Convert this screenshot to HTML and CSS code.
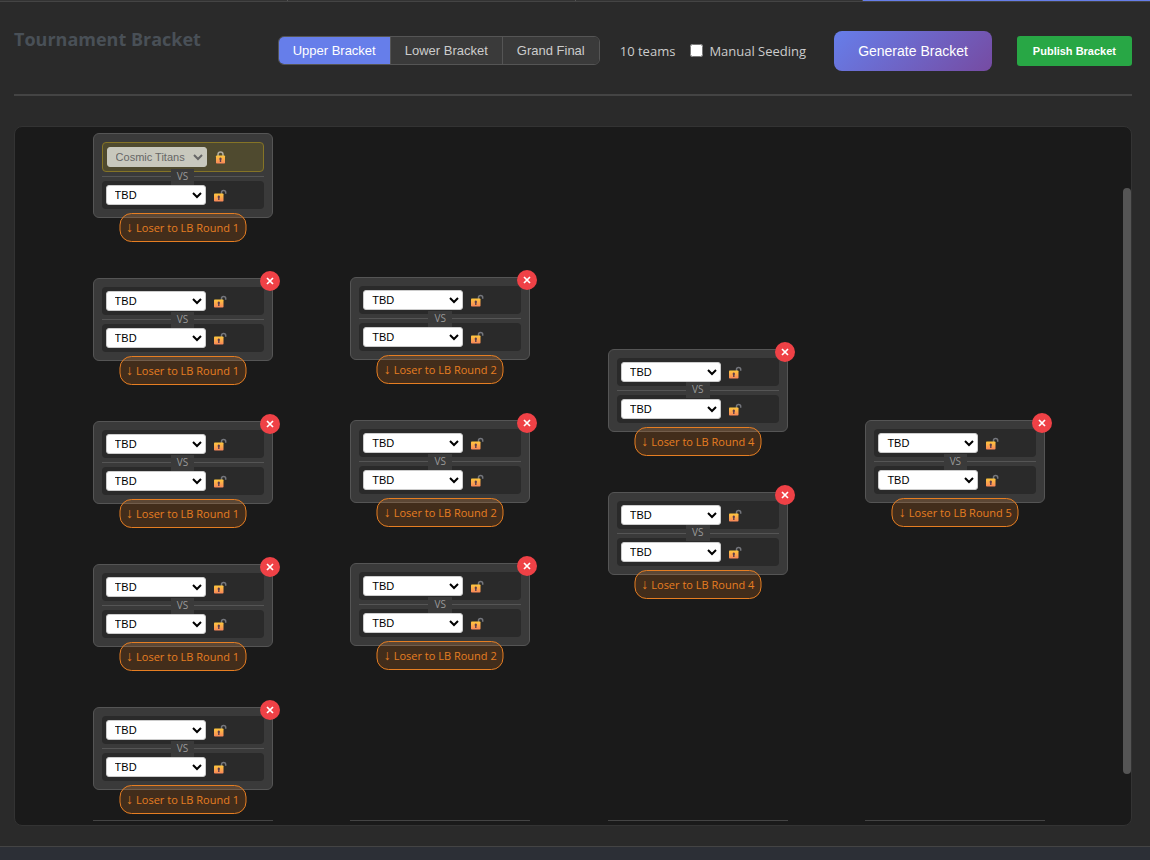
FILE: index.html
```html
<!DOCTYPE html>
<html lang="en">
<head>
<meta charset="utf-8">
<title>Tournament Bracket</title>
<link rel="stylesheet" href="styles.css">
</head>
<body>
<svg width="0" height="0" class="defs" aria-hidden="true">
  <defs>
    <linearGradient id="gold" x1="0" y1="0" x2="0" y2="1"><stop offset="0" stop-color="#ffc83d"/><stop offset="1" stop-color="#f8865a"/></linearGradient>
    <symbol id="lock-open" viewBox="0 0 13 13">
      <path d="M7.500 5.200V3.600a2.100 2.100 0 0 1 4.200 0V4.800" fill="none" stroke="#74767c" stroke-width="1.500"/>
      <rect x="0" y="4.500" width="9.500" height="8" rx="0.800" fill="url(#gold)"/>
      <path d="M4.800 6.600a1.300 1.300 0 0 1 .7 2.300V11H4.100V8.900A1.300 1.300 0 0 1 4.800 6.600z" fill="#5c3b4c"/>
    </symbol>
    <symbol id="lock-closed" viewBox="0 0 13 13">
      <path d="M4 5.500V3.500a2.500 2.500 0 0 1 5 0V5.500" fill="none" stroke="#b0aca0" stroke-width="1.500"/>
      <rect x="2" y="4.500" width="9" height="8" rx="0.800" fill="url(#gold)"/>
      <path d="M6.500 6.600a1.300 1.300 0 0 1 .7 2.300V11H5.800V8.900A1.300 1.300 0 0 1 6.500 6.600z" fill="#5c3b4c"/>
    </symbol>
  </defs>
</svg>
<div class="tabs"><span class="tab"></span><span class="tab"></span><span class="tab"></span><span class="tab tab-active"></span></div>
<main class="page">
  <header class="header">
    <h1 class="title">Tournament Bracket</h1>
    <div class="controls">
      <div class="toggle">
        <button class="toggle-btn is-active" type="button">Upper Bracket</button>
        <button class="toggle-btn" type="button">Lower Bracket</button>
        <button class="toggle-btn" type="button">Grand Final</button>
      </div>
      <span class="count">10 teams</span>
      <label class="seeding"><input type="checkbox" class="check">Manual Seeding</label>
      <button class="generate" type="button">Generate Bracket</button>
      <button class="publish" type="button">Publish Bracket</button>
    </div>
  </header>
  <section class="bracket">
    <div class="rounds" id="rounds"></div>
    <div class="track"><div class="thumb"></div></div>
  </section>
</main>
<footer class="footer"></footer>
<script src="app.js"></script>
</body>
</html>
```
FILE: styles.css
```css
* { box-sizing: border-box; }
body {
  margin: 0;
  min-height: 100vh;
  display: flex;
  flex-direction: column;
  background: #2a2a2a;
  color: #ccc;
  font-family: "Open Sans", "Noto Sans", sans-serif;
}
button, select { font-family: "Liberation Sans", Arial, sans-serif; }
.defs { position: absolute; }

.tabs { display: flex; height: 2px; background: #333; border-bottom: 1px solid #444; }
.tab { flex: 1; border-right: 1px solid #555; }
.tab-active { background: #667eea; border-right: 0; }

.page { padding: 29px 18px 20px 14px; }
.header {
  display: flex;
  justify-content: space-between;
  align-items: flex-start;
  padding-bottom: 23px;
  border-bottom: 2px solid #444;
  margin-bottom: 30px;
}
.title { margin: 0; font-size: 18px; line-height: 16px; font-weight: 700; color: #495057; }
.controls { display: flex; align-items: center; }
.toggle { display: flex; border: 1px solid #555; border-radius: 6px; overflow: hidden; margin: 0 20px 1px 0; }
.toggle-btn {
  height: 27px;
  padding: 0 14px;
  border: 0;
  border-right: 1px solid #555;
  background: #3a3a3a;
  color: #ccc;
  font-size: 13px;
}
.toggle-btn:last-child { border-right: 0; }
.toggle-btn.is-active { background: #667eea; color: #fff; }
.count { font-size: 13px; margin-right: 15px; }
.seeding { display: flex; align-items: center; gap: 6px; font-size: 13px; margin: 0 28px 1px 0; }
.check { width: 13px; height: 13px; margin: 0; }
.generate {
  height: 40px;
  padding: 0 24px;
  border: 0;
  border-radius: 8px;
  background: linear-gradient(135deg, #667eea, #764ba2);
  color: #fff;
  font-size: 14px;
  margin-right: 25px;
}
.publish {
  height: 30px;
  padding: 0 16px;
  border: 0;
  border-radius: 3px;
  background: #28a745;
  color: #fff;
  font-size: 11px;
  font-weight: 700;
}

.bracket {
  display: flex;
  background: #1a1a1a;
  border: 1px solid #333;
  border-radius: 8px;
  overflow: hidden;
}
.rounds { flex: 1; display: flex; justify-content: space-evenly; padding: 6px 0 4px; }
.round {
  width: 180px;
  display: flex;
  flex-direction: column;
  justify-content: center;
  gap: 60px;
  padding-bottom: 30px;
  border-bottom: 1px solid #444;
}
.match {
  position: relative;
  padding: 8px;
  background: #3a3a3a;
  border: 1px solid #555;
  border-radius: 6px;
}
.slot {
  display: flex;
  align-items: center;
  gap: 6px;
  padding: 4px;
  background: #2a2a2a;
  border-radius: 4px;
}
.slot-locked { background: #4f4a2f; border: 1px solid #857426; }
.team {
  width: 100px;
  height: 20px;
  padding: 0 4px;
  border: 1px solid #ccc;
  border-radius: 3px;
  background: #fff;
  color: #000;
  font-size: 11px;
}
.team:disabled { background: #c8c8bd; border-color: #c8c8bd; color: #666; opacity: 1; }
.lock { display: flex; border: 0; padding: 1px 2px 0; background: none; }
.slot-locked .lock { padding: 1px 1px 0; }
.lock-icon { width: 13px; height: 13px; }
.versus {
  position: relative;
  z-index: 1;
  height: 9px;
  display: flex;
  align-items: center;
  justify-content: center;
  background: linear-gradient(#555, #555) center / 100% 1px no-repeat;
}
.versus-text {
  padding: 0 6px 1px;
  background: #3a3a3a;
  color: #999;
  font-size: 10px;
  line-height: 15px;
}
.remove {
  position: absolute;
  top: -8px;
  right: -8px;
  width: 20px;
  height: 20px;
  display: flex;
  align-items: center;
  justify-content: center;
  padding: 0;
  border: 0;
  border-radius: 50%;
  background: #ef4146;
}
.remove-icon { width: 8px; height: 8px; }
.loser {
  position: absolute;
  z-index: 2;
  top: calc(100% - 4px);
  left: 50%;
  transform: translateX(-50%);
  display: flex;
  gap: 3px;
  padding: 0 6px;
  border: 1px solid #e67e22;
  border-radius: 12px;
  background: rgba(230, 126, 34, 0.2);
  color: #e67e22;
  font-size: 11px;
  font-weight: 500;
  line-height: 27px;
  white-space: nowrap;
}
.arrow { font-size: 14px; line-height: 26px; }
.track { width: 8px; padding: 61px 0 51px; display: flex; }
.thumb { flex: 1; border-radius: 4px; background: #555; }
.footer { flex: 1; background: #2c2f36; border-top: 1px solid #444; }
```
FILE: app.js
```js
const rounds = [
  { matches: 5, loser: 1 },
  { matches: 3, loser: 2 },
  { matches: 2, loser: 4 },
  { matches: 1, loser: 5 }
];

function slot(team, locked, label) {
  return `<div class="slot${locked ? " slot-locked" : ""}">
    <select class="team" aria-label="${label}"${locked ? " disabled" : ""}><option>${team}</option></select>
    <button class="lock" type="button" aria-label="Toggle lock"><svg class="lock-icon"><use href="#lock-${locked ? "closed" : "open"}"/></svg></button>
  </div>`;
}

function match(round, r, m) {
  const first = r === 0 && m === 0;
  const name = `Round ${r + 1} match ${m + 1}`;
  const remove = first ? "" : `<button class="remove" type="button" aria-label="Remove match"><svg class="remove-icon" viewBox="0 0 8 8"><path d="M1 1L7 7M7 1L1 7" stroke="#fff" stroke-width="1.7"/></svg></button>`;
  return `<article class="match">
    ${slot(first ? "Cosmic Titans" : "TBD", first, name + " team 1")}
    <div class="versus"><span class="versus-text">VS</span></div>
    ${slot("TBD", false, name + " team 2")}
    ${remove}
    <div class="loser"><span class="arrow">↓</span><span>Loser to LB Round ${round.loser}</span></div>
  </article>`;
}

document.getElementById("rounds").innerHTML = rounds.map((round, r) =>
  `<div class="round">${Array.from({ length: round.matches }, (_, m) => match(round, r, m)).join("")}</div>`
).join("");
```
